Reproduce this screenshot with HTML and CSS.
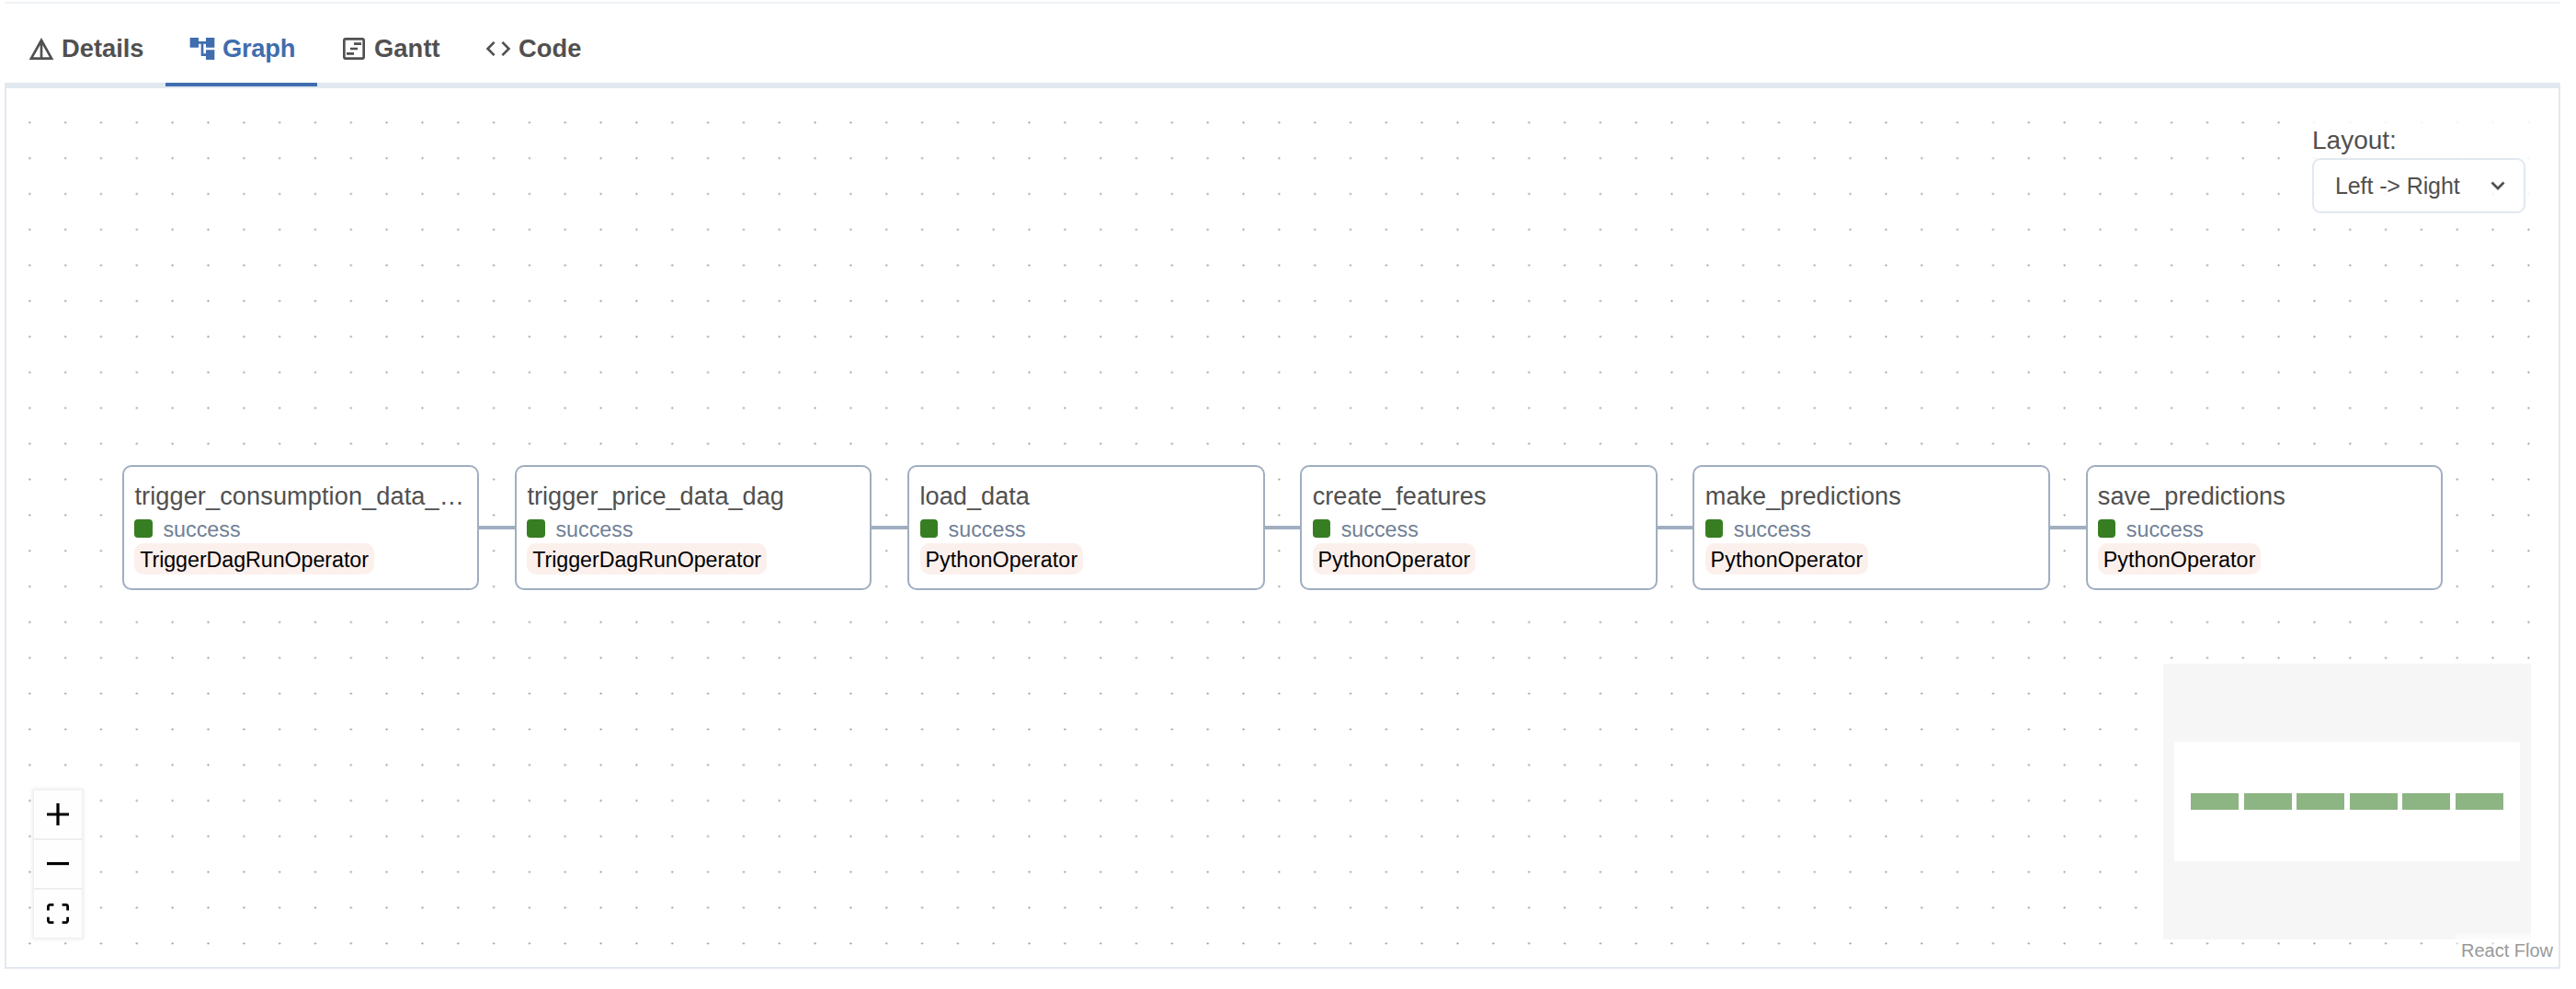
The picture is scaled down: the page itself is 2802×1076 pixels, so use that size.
FILE: index.html
```html
<!DOCTYPE html>
<html lang="en">
<head>
<meta charset="utf-8">
<title>DAG graph</title>
<link rel="stylesheet" href="styles.css">
</head>
<body>
<main class="view">
  <nav class="tabs">
    <a class="tab tab-details"><svg class="icon" viewBox="0 0 24 24"><path d="M12 3L2 21h20L12 3zm1 5.92L18.6 19H13V8.92zm-2 0V19H5.4L11 8.92z"/></svg>Details</a>
    <a class="tab tab-graph active"><svg class="icon" viewBox="0 0 24 24"><path d="M22 11V3h-7v3H9V3H2v8h7V8h2v10h4v3h7v-8h-7v3h-2V8h2v3z"/></svg>Graph</a>
    <a class="tab tab-gantt"><svg class="icon" viewBox="0 0 24 24"><path d="M19 5v14H5V5h14m0-2H5c-1.1 0-2 .9-2 2v14c0 1.1.9 2 2 2h14c1.1 0 2-.9 2-2V5c0-1.1-.9-2-2-2z"/><path d="M12 7h6v2h-6zM9 11h6v2H9zM6 15h6v2H6z"/></svg>Gantt</a>
    <a class="tab tab-code"><svg class="icon" viewBox="0 0 24 24"><path d="M9.4 16.6L4.8 12l4.6-4.6L8 6l-6 6 6 6 1.4-1.4zm5.2 0l4.6-4.6-4.6-4.6L16 6l6 6-6 6-1.4-1.4z"/></svg>Code</a>
  </nav>
  <section class="canvas">
    <svg class="dots">
      <defs><pattern id="grid" x="5.9" y="17.9" width="38.83" height="38.83" patternUnits="userSpaceOnUse"><circle cx="19.42" cy="19.42" r="1.1"/></pattern></defs>
      <rect width="100%" height="100%" fill="url(#grid)"/>
    </svg>
    <div class="flow">
      <article class="node"><h3 class="long">trigger_consumption_data_…</h3><p class="state"><i></i>success</p><span class="operator trigger">TriggerDagRunOperator</span></article>
      <div class="edge"></div>
      <article class="node"><h3>trigger_price_data_dag</h3><p class="state"><i></i>success</p><span class="operator trigger">TriggerDagRunOperator</span></article>
      <div class="edge"></div>
      <article class="node"><h3>load_data</h3><p class="state"><i></i>success</p><span class="operator">PythonOperator</span></article>
      <div class="edge"></div>
      <article class="node"><h3>create_features</h3><p class="state"><i></i>success</p><span class="operator">PythonOperator</span></article>
      <div class="edge"></div>
      <article class="node"><h3>make_predictions</h3><p class="state"><i></i>success</p><span class="operator">PythonOperator</span></article>
      <div class="edge"></div>
      <article class="node"><h3>save_predictions</h3><p class="state"><i></i>success</p><span class="operator">PythonOperator</span></article>
    </div>
    <div class="layout-panel">
      <label>Layout:</label>
      <div class="select"><span>Left -&gt; Right</span><svg viewBox="0 0 16 10"><path d="M1.5 1.5L8 8l6.5-6.5"/></svg></div>
    </div>
    <div class="controls">
      <button><svg viewBox="0 0 32 32"><path d="M32 18.133H18.133V32h-4.266V18.133H0v-4.266h13.867V0h4.266v13.867H32z"/></svg></button>
      <button><svg viewBox="0 0 32 5"><path d="M0 0h32v4.2H0z"/></svg></button>
      <button><svg viewBox="0 0 32 30"><path d="M3.692 4.63c0-.53.4-.938.939-.938h5.215V0H4.708C2.13 0 0 2.054 0 4.63v5.216h3.692V4.631zM27.354 0h-5.2v3.692h5.17c.53 0 .984.4.984.939v5.215H32V4.631A4.624 4.624 0 0027.354 0zm.954 24.83c0 .532-.4.94-.939.94h-5.215v3.768h5.215c2.577 0 4.631-2.13 4.631-4.707v-5.139h-3.692v5.139zm-23.677.94c-.531 0-.939-.4-.939-.94v-5.138H0v5.139c0 2.577 2.13 4.707 4.708 4.707h5.138V25.77H4.631z"/></svg></button>
    </div>
    <div class="minimap"><div class="minimap-view"><i></i><i></i><i></i><i></i><i></i><i></i></div></div>
    <div class="attribution">React Flow</div>
  </section>
</main>
</body>
</html>
```
FILE: styles.css
```css
* { box-sizing: border-box; }
body { margin: 0; background: #fff; color: #51504f; font-family: "Liberation Sans", Arial, sans-serif; }
h3, p { margin: 0; font-weight: 400; }
.view { margin: 2px 17px 0 5px; border-top: 2px solid #edf2f7; height: 1052px; display: flex; flex-direction: column; }
.tabs { display: flex; height: 92px; flex: none; border-bottom: 6px solid #e2e8f0; }
.tab { display: flex; align-items: center; gap: 6px; height: 90px; padding: 12px 0 0 24px; border-bottom: 4px solid transparent; font-size: 27.3px; font-weight: 700; white-space: nowrap; }
.icon { width: 32px; height: 32px; fill: currentColor; flex: none; }
.tab-details { width: 175px; }
.tab-graph { width: 165px; letter-spacing: -.25px; }
.tab-gantt { width: 157px; letter-spacing: .1px; }
.tab-code { width: 154px; letter-spacing: .1px; }
.active { color: #3f6dae; border-bottom-color: #3f6dae; }
.canvas { position: relative; flex: 1; border: 2px solid #e2e8f0; border-top: 0; padding: 410.3px 0 0 126.1px; overflow: hidden; }
.dots { position: absolute; inset: 0; width: 100%; height: 100%; fill: #919191; }
.flow { position: relative; display: flex; align-items: center; }
.node { width: 388.3px; height: 135.9px; flex: none; background: #fff; border: 2px solid #a0aec0; border-radius: 10px; padding: 11.3px 11.3px 0; }
.node h3 { font-size: 27.18px; line-height: 40px; height: 42px; white-space: nowrap; }
.node h3.long { letter-spacing: .08px; }
.state { display: flex; align-items: center; gap: 11.6px; height: 28px; font-size: 23.3px; line-height: 28px; color: #718096; }
.state i { width: 19.4px; height: 19.4px; border-radius: 4px; background: #377e22; margin-top: -1px; }
.operator { display: block; width: max-content; margin-top: 1.8px; padding: 1.6px 5.8px 0; border-radius: 10px; background: #fcf0ed; color: #000; font-size: 23.3px; line-height: 32.2px; letter-spacing: .1px; }
.operator.trigger { letter-spacing: -.08px; }
.edge { width: 38.8px; height: 4px; flex: none; background: #a0aec0; }
.layout-panel { position: absolute; top: 24px; right: 26px; width: 252px; padding: 14px 10px 0; background: rgba(255,255,255,.85); }
.layout-panel label { display: block; height: 38px; font-size: 28px; line-height: 38px; }
.select { display: flex; align-items: center; justify-content: space-between; height: 60px; width: 232px; padding: 0 20px 0 23px; border: 2px solid #e2e8f0; border-radius: 9px; font-size: 25px; letter-spacing: -.1px; }
.select svg { width: 16px; height: 10px; fill: none; stroke: currentColor; stroke-width: 2.7; }
.controls { position: absolute; left: 30px; bottom: 32px; box-shadow: 0 0 4px 2px rgba(0,0,0,.08); }
.controls button { display: flex; align-items: center; justify-content: center; width: 52px; height: 54px; padding: 0; border: 0; border-bottom: 2px solid #eee; background: #fefefe; }
.controls button:last-child { height: 52px; border: 0; }
.controls svg { width: 24px; display: block; }
.minimap { position: absolute; right: 30px; bottom: 30px; width: 400px; height: 300px; background: #f6f6f6; padding: 85.3px 12.4px; }
.minimap-view { display: flex; align-items: center; justify-content: space-between; height: 129.4px; padding: 0 17.6px; background: #fff; }
.minimap-view i { width: 52px; height: 18px; background: #8db583; }
.attribution { position: absolute; right: 0; bottom: 0; padding: 0 6px; background: rgba(255,255,255,.5); color: #999; font-size: 20px; line-height: 36px; }
```
